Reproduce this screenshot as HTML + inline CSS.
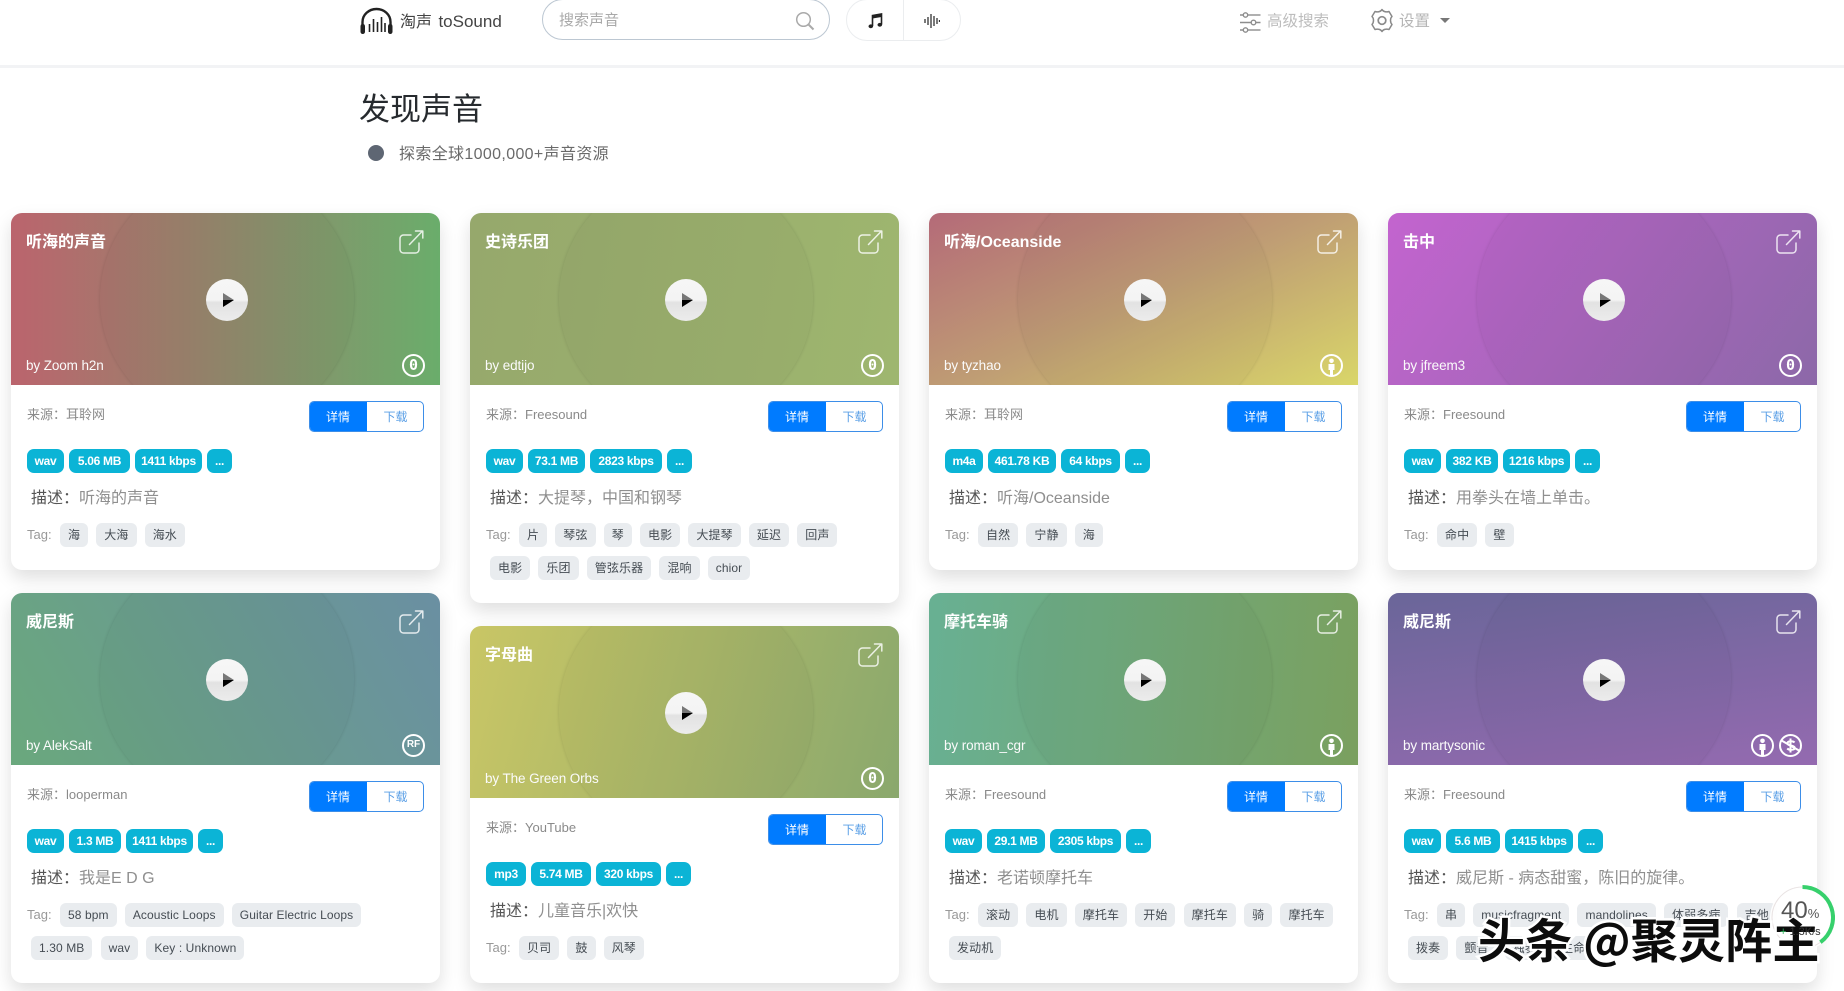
<!DOCTYPE html>
<html lang="zh"><head><meta charset="utf-8"><title>淘声 toSound</title>
<style>
*{box-sizing:border-box}
html,body{margin:0;padding:0;width:1844px;height:991px;overflow:hidden;background:#fff;font-family:"Liberation Sans","Noto Sans CJK SC",sans-serif}
.a{position:absolute}
.nav{position:absolute;left:0;top:0;width:1844px;height:68px;border-bottom:3px solid #f2f3f5}
.card{position:absolute;width:429px;background:#fff;border-radius:11px;box-shadow:0 8px 18px rgba(0,0,0,.13)}
.hd{position:absolute;left:0;top:0;width:429px;height:172px;overflow:hidden;border-radius:11px 11px 0 0;color:#fff}
.disc{position:absolute;left:89px;top:-41px;width:254px;height:254px;border-radius:50%;background:rgba(0,0,0,.025);box-shadow:0 0 3px rgba(0,0,0,.13)}
.play{position:absolute;left:195px;top:66px;width:42px;height:42px;border-radius:50%;background:linear-gradient(180deg,#f6f6f6 0,#f4f4f4 50%,#e2e2e2 56%,#ececec 100%)}
.play svg{position:absolute;left:0;top:0}
.tt{position:absolute;left:15px;top:18px;font-size:16px;line-height:24px;font-weight:700;white-space:nowrap}
.by{position:absolute;left:15px;top:143px;font-size:13.5px;letter-spacing:-.1px;line-height:20px;color:#fbfbfb;white-space:nowrap}
.sh{position:absolute;left:388px;top:17px}
.lic{position:absolute;top:141px;width:23px;height:23px;border:2.5px solid #fff;border-radius:50%;text-align:center;color:#fff;font:700 15px/18px "DejaVu Sans Mono","Liberation Mono",monospace}
.rf{font:700 10px/18px "Liberation Sans",sans-serif}
.lic svg{position:absolute;left:-2.5px;top:-2.5px}
.src{position:absolute;left:16px;top:192px;font-size:13px;line-height:20px;color:#8a8a8a;white-space:nowrap}
.btn{position:absolute;left:298px;top:188px;width:115px;height:31px;border-radius:5px;border:1px solid #3d8ee8;overflow:hidden;font-size:12px;line-height:30px;text-align:center}
.btn b{position:absolute;left:-1px;top:-1px;width:58px;height:31px;line-height:32px;background:#007bff;color:#fff;font-weight:400}
.btn i{position:absolute;left:57px;top:0;width:57px;font-style:normal;color:#5a9fe6}
.bg{position:absolute;left:16px;top:236px;display:flex;gap:5px}
.bg span{height:24px;line-height:24px;text-align:center;border-radius:7px;background:#0bb4d6;color:#fff;font-size:12px;font-weight:700;letter-spacing:-.3px;white-space:nowrap}
.ds{position:absolute;left:20px;top:274px;font-size:16px;line-height:24px;color:#8f8f8f;white-space:nowrap}
.ds b{font-weight:400;color:#555}
.tr{position:absolute;top:310px;display:flex;gap:8.2px;height:24px;align-items:center;white-space:nowrap}
.t1{left:49px}.t2{top:343px;left:20px}
.tr span{height:24px;line-height:24px;padding:0 8px;border-radius:6px;background:#e9ecef;color:#454c53;font-size:12px;letter-spacing:.1px}
.tl{position:absolute;left:16px;top:310px;font-size:13px;line-height:24px;color:#999}
.wm{position:absolute;left:1478px;top:906px;font-family:"Noto Sans CJK SC",sans-serif;font-size:47px;font-weight:700;line-height:64px;color:#0c0c0c;white-space:nowrap;-webkit-text-stroke:5px #fff;paint-order:stroke fill;letter-spacing:.2px}
</style></head><body>
<svg width="0" height="0" style="position:absolute"><defs>
<symbol id="share" viewBox="0 0 25 24"><g fill="none" stroke="#fff" stroke-opacity=".82" stroke-width="1.5" stroke-linecap="round" stroke-linejoin="round"><path d="M12 5H4.5A3.5 3.5 0 0 0 1 8.500V19.500A3.500 3.500 0 0 0 4.500 23H16.500A3.500 3.500 0 0 0 20 19.500V13"/><path d="M10.500 14.500L23.500 1M16.500 1H23.800V8"/></g></symbol>
<symbol id="man" viewBox="0 0 23 23"><circle cx="11.500" cy="6.800" r="2.300" fill="#fff"/><path d="M8.500 10h6v6h-1.500v5h-3v-5h-1.500z" fill="#fff"/></symbol>
<symbol id="nc" viewBox="0 0 23 23"><path d="M15.500 8.500c-1.500-1.800-7-1.800-7 .8 0 3 7.200 1.600 7.200 4.600 0 2.500-5.600 2.400-7.500.6M11.500 4.500v14" fill="none" stroke="#fff" stroke-width="2"/><path d="M2.500 6.500L20 16.500" stroke="#fff" stroke-width="2"/></symbol>
</defs></svg>

<div class="nav"></div>
<svg class="a" style="left:360px;top:7px" width="33" height="28" viewBox="0 0 33 28"><path d="M2.500 20V15A14 13 0 0 1 30.500 15V20" fill="none" stroke="#222" stroke-width="2.400"/><rect x=".5" y="17" width="4.500" height="10" rx="2.200" fill="#222"/><rect x="28" y="17" width="4.500" height="10" rx="2.200" fill="#222"/><path d="M9.500 17v8M13.500 12v13M17.500 15v10M21.500 10v15M25 16v9" stroke="#222" stroke-width="1.600"/></svg>
<div class="a" style="left:400px;top:10px;font-size:16px;line-height:24px;color:#444;white-space:nowrap">淘声 <span style="font-size:17px;margin-left:2px">toSound</span></div>
<div class="a" style="left:542px;top:-1px;width:288px;height:41px;border:1px solid #bcc7d2;border-radius:21px"></div>
<div class="a" style="left:559px;top:10px;font-size:15px;line-height:22px;color:#a9a9a9">搜索声音</div>
<svg class="a" style="left:795px;top:11px" width="20" height="20" viewBox="0 0 20 20"><circle cx="8.500" cy="8.500" r="6.800" fill="none" stroke="#aaa" stroke-width="1.500"/><path d="M13.500 13.500L18.500 18.500" stroke="#aaa" stroke-width="2"/></svg>
<div class="a" style="left:846px;top:-1px;width:115px;height:42px;border:1px solid #ebedef;border-radius:21px"></div>
<div class="a" style="left:903px;top:0;width:1px;height:41px;background:#ebedef"></div>
<svg class="a" style="left:868px;top:13px" width="15" height="16" viewBox="0 0 15 16"><path d="M4.500 13V2.500L13.500 1V11.500" fill="none" stroke="#222" stroke-width="1.600"/><path d="M4.500 2.500L13.500 1V4L4.500 5.500z" fill="#222"/><ellipse cx="2.800" cy="13.300" rx="2.300" ry="1.900" fill="#222"/><ellipse cx="11.800" cy="11.800" rx="2.300" ry="1.900" fill="#222"/></svg>
<svg class="a" style="left:924px;top:14px" width="16" height="14" viewBox="0 0 16 14"><path d="M1 5v4M4 3v8M7 0v14M10 2v10M13 4v6M15.500 6v2" stroke="#333" stroke-width="1.300"/></svg>
<svg class="a" style="left:1240px;top:12px" width="21" height="21" viewBox="0 0 21 21"><g fill="none" stroke="#8d8d8d" stroke-width="1.400"><circle cx="5.500" cy="3" r="2.200"/><path d="M8 3H20.500"/><path d="M0 10.500H11M16 10.500H20.500"/><circle cx="13.500" cy="10.500" r="2.300"/><circle cx="5.500" cy="18" r="2.200"/><path d="M8 18H20.500"/><path d="M0 3H3M0 18H3"/></g></svg>
<div class="a" style="left:1267px;top:10px;font-size:15.500px;line-height:24px;color:#bdbdbd;white-space:nowrap">高级搜索</div>
<svg class="a" style="left:1370px;top:8px" width="24" height="25" viewBox="0 0 24 25"><path d="M12 1.500c1 2 4 3 7 2l3 5c-2 1.800-2 6 0 8l-3 5c-3-1-6 0-7 2-1-2-4-3-7-2l-3-5c2-2 2-6.200 0-8l3-5c3 1 6 0 7-2z" fill="none" stroke="#8a8a8a" stroke-width="1.500" stroke-linejoin="round"/><circle cx="12" cy="12.500" r="3.800" fill="none" stroke="#8a8a8a" stroke-width="1.700"/></svg>
<div class="a" style="left:1399px;top:10px;font-size:15.500px;line-height:24px;color:#b5b5b5;white-space:nowrap">设置</div>
<div class="a" style="left:1440px;top:18px;width:0;height:0;border-left:5px solid transparent;border-right:5px solid transparent;border-top:5px solid #777"></div>

<div class="a" style="left:359px;top:89px;font-size:31px;line-height:42px;color:#262a2e;white-space:nowrap">发现声音</div>
<div class="a" style="left:368px;top:145px;width:16px;height:16px;border-radius:50%;background:#5e6673"></div>
<div class="a" style="left:399px;top:143px;font-size:16px;letter-spacing:.35px;line-height:24px;color:#6a6a6a;white-space:nowrap">探索全球1000,000+声音资源</div>

<!-- 1 -->
<div class="card" style="left:11px;top:213px;height:357px">
<div class="hd" style="background:linear-gradient(90deg,#bb646d,#6aad6b)"><div class="disc"></div><div class="play"><svg width="42" height="42"><polygon points="17,14 28,21 17,21" fill="#777"/><polygon points="17,21 28,21 17,28" fill="#000"/></svg></div><div class="tt">听海的声音</div><div class="by">by Zoom h2n</div><svg class="sh" width="25" height="24"><use href="#share"/></svg><div class="lic" style="left:391px">0</div></div>
<div class="src">来源&#65306;耳聆网</div><div class="btn"><b>详情</b><i>下载</i></div>
<div class="bg"><span style="width:37px">wav</span><span style="width:61px">5.06 MB</span><span style="width:67px">1411 kbps</span><span style="width:25px">...</span></div>
<div class="ds"><b>描述&#65306;</b>听海的声音</div>
<div class="tl">Tag:</div><div class="tr t1"><span>海</span><span>大海</span><span>海水</span></div>
</div>
<!-- 2 -->
<div class="card" style="left:470px;top:213px;height:390px">
<div class="hd" style="background:linear-gradient(100deg,#96a86c,#9eb66f)"><div class="disc"></div><div class="play"><svg width="42" height="42"><polygon points="17,14 28,21 17,21" fill="#777"/><polygon points="17,21 28,21 17,28" fill="#000"/></svg></div><div class="tt">史诗乐团</div><div class="by">by edtijo</div><svg class="sh" width="25" height="24"><use href="#share"/></svg><div class="lic" style="left:391px">0</div></div>
<div class="src">来源&#65306;Freesound</div><div class="btn"><b>详情</b><i>下载</i></div>
<div class="bg"><span style="width:37px">wav</span><span style="width:57px">73.1 MB</span><span style="width:72px">2823 kbps</span><span style="width:25px">...</span></div>
<div class="ds"><b>描述&#65306;</b>大提琴&#65292;中国和钢琴</div>
<div class="tl">Tag:</div><div class="tr t1"><span>片</span><span>琴弦</span><span>琴</span><span>电影</span><span>大提琴</span><span>延迟</span><span>回声</span></div>
<div class="tr t2"><span>电影</span><span>乐团</span><span>管弦乐器</span><span>混响</span><span>chior</span></div>
</div>
<!-- 3 -->
<div class="card" style="left:929px;top:213px;height:357px">
<div class="hd" style="background:linear-gradient(155deg,#b46a78 0,#bf9d74 50%,#d9d669 100%)"><div class="disc"></div><div class="play"><svg width="42" height="42"><polygon points="17,14 28,21 17,21" fill="#777"/><polygon points="17,21 28,21 17,28" fill="#000"/></svg></div><div class="tt">听海/Oceanside</div><div class="by">by tyzhao</div><svg class="sh" width="25" height="24"><use href="#share"/></svg><div class="lic" style="left:391px"><svg width="23" height="23"><use href="#man"/></svg></div></div>
<div class="src">来源&#65306;耳聆网</div><div class="btn"><b>详情</b><i>下载</i></div>
<div class="bg"><span style="width:38px">m4a</span><span style="width:68px">461.78 KB</span><span style="width:59px">64 kbps</span><span style="width:25px">...</span></div>
<div class="ds"><b>描述&#65306;</b>听海/Oceanside</div>
<div class="tl">Tag:</div><div class="tr t1"><span>自然</span><span>宁静</span><span>海</span></div>
</div>
<!-- 4 -->
<div class="card" style="left:1388px;top:213px;height:357px">
<div class="hd" style="background:linear-gradient(125deg,#c364cf,#8c68a8)"><div class="disc"></div><div class="play"><svg width="42" height="42"><polygon points="17,14 28,21 17,21" fill="#777"/><polygon points="17,21 28,21 17,28" fill="#000"/></svg></div><div class="tt">击中</div><div class="by">by jfreem3</div><svg class="sh" width="25" height="24"><use href="#share"/></svg><div class="lic" style="left:391px">0</div></div>
<div class="src">来源&#65306;Freesound</div><div class="btn"><b>详情</b><i>下载</i></div>
<div class="bg"><span style="width:37px">wav</span><span style="width:52px">382 KB</span><span style="width:67px">1216 kbps</span><span style="width:25px">...</span></div>
<div class="ds"><b>描述&#65306;</b>用拳头在墙上单击。</div>
<div class="tl">Tag:</div><div class="tr t1"><span>命中</span><span>壁</span></div>
</div>
<!-- 5 -->
<div class="card" style="left:11px;top:593px;height:390px">
<div class="hd" style="background:linear-gradient(60deg,#6aa87d,#6a8fa2)"><div class="disc"></div><div class="play"><svg width="42" height="42"><polygon points="17,14 28,21 17,21" fill="#777"/><polygon points="17,21 28,21 17,28" fill="#000"/></svg></div><div class="tt">威尼斯</div><div class="by">by AlekSalt</div><svg class="sh" width="25" height="24"><use href="#share"/></svg><div class="lic rf" style="left:391px">RF</div></div>
<div class="src">来源&#65306;looperman</div><div class="btn"><b>详情</b><i>下载</i></div>
<div class="bg"><span style="width:37px">wav</span><span style="width:52px">1.3 MB</span><span style="width:67px">1411 kbps</span><span style="width:25px">...</span></div>
<div class="ds"><b>描述&#65306;</b>我是E D G</div>
<div class="tl">Tag:</div><div class="tr t1"><span>58 bpm</span><span>Acoustic Loops</span><span>Guitar Electric Loops</span></div>
<div class="tr t2"><span>1.30 MB</span><span>wav</span><span>Key : Unknown</span></div>
</div>
<!-- 6 -->
<div class="card" style="left:470px;top:626px;height:357px">
<div class="hd" style="background:linear-gradient(105deg,#c9c665,#8aa86d)"><div class="disc"></div><div class="play"><svg width="42" height="42"><polygon points="17,14 28,21 17,21" fill="#777"/><polygon points="17,21 28,21 17,28" fill="#000"/></svg></div><div class="tt">字母曲</div><div class="by">by The Green Orbs</div><svg class="sh" width="25" height="24"><use href="#share"/></svg><div class="lic" style="left:391px">0</div></div>
<div class="src">来源&#65306;YouTube</div><div class="btn"><b>详情</b><i>下载</i></div>
<div class="bg"><span style="width:40px">mp3</span><span style="width:60px">5.74 MB</span><span style="width:65px">320 kbps</span><span style="width:25px">...</span></div>
<div class="ds"><b>描述&#65306;</b>儿童音乐|欢快</div>
<div class="tl">Tag:</div><div class="tr t1"><span>贝司</span><span>鼓</span><span>风琴</span></div>
</div>
<!-- 7 -->
<div class="card" style="left:929px;top:593px;height:390px">
<div class="hd" style="background:linear-gradient(95deg,#68b093,#7aa05f)"><div class="disc"></div><div class="play"><svg width="42" height="42"><polygon points="17,14 28,21 17,21" fill="#777"/><polygon points="17,21 28,21 17,28" fill="#000"/></svg></div><div class="tt">摩托车骑</div><div class="by">by roman_cgr</div><svg class="sh" width="25" height="24"><use href="#share"/></svg><div class="lic" style="left:391px"><svg width="23" height="23"><use href="#man"/></svg></div></div>
<div class="src">来源&#65306;Freesound</div><div class="btn"><b>详情</b><i>下载</i></div>
<div class="bg"><span style="width:37px">wav</span><span style="width:58px">29.1 MB</span><span style="width:71px">2305 kbps</span><span style="width:25px">...</span></div>
<div class="ds"><b>描述&#65306;</b>老诺顿摩托车</div>
<div class="tl">Tag:</div><div class="tr t1"><span>滚动</span><span>电机</span><span>摩托车</span><span>开始</span><span>摩托车</span><span>骑</span><span>摩托车</span></div>
<div class="tr t2"><span>发动机</span></div>
</div>
<!-- 8 -->
<div class="card" style="left:1388px;top:593px;height:390px">
<div class="hd" style="background:linear-gradient(172deg,#6a6699,#946ab0)"><div class="disc"></div><div class="play"><svg width="42" height="42"><polygon points="17,14 28,21 17,21" fill="#777"/><polygon points="17,21 28,21 17,28" fill="#000"/></svg></div><div class="tt">威尼斯</div><div class="by">by martysonic</div><svg class="sh" width="25" height="24"><use href="#share"/></svg><div class="lic" style="left:363px"><svg width="23" height="23"><use href="#man"/></svg></div><div class="lic" style="left:391px"><svg width="23" height="23"><use href="#nc"/></svg></div></div>
<div class="src">来源&#65306;Freesound</div><div class="btn"><b>详情</b><i>下载</i></div>
<div class="bg"><span style="width:37px">wav</span><span style="width:54px">5.6 MB</span><span style="width:68px">1415 kbps</span><span style="width:25px">...</span></div>
<div class="ds"><b>描述&#65306;</b>威尼斯 - 病态甜蜜&#65292;陈旧的旋律。</div>
<div class="tl">Tag:</div><div class="tr t1"><span>串</span><span>musicfragment</span><span>mandolines</span><span>体弱多病</span><span>吉他</span></div>
<div class="tr t2"><span>拨奏</span><span>颤音</span><span>独奏</span><span>生命</span></div>
</div>

<!-- speed widget -->
<div class="a" style="left:1770px;top:885px;width:65px;height:65px;border-radius:50%;background:rgba(255,255,255,.92)"></div>
<svg class="a" style="left:1770px;top:885px" width="65" height="65" viewBox="0 0 65 65"><circle cx="32.500" cy="32.500" r="30.500" fill="none" stroke="#e9e3e3" stroke-width="1"/><path d="M32.500 2A30.500 30.500 0 0 1 50.400 57.200" fill="none" stroke="#37d06c" stroke-width="4"/></svg>
<div class="wm">头条 @聚灵阵主</div>
<div class="a" style="left:1781px;top:896px;font-size:24px;line-height:30px;color:#555;white-space:nowrap">40<span style="font-size:13px">%</span></div>
<div class="a" style="left:1780px;top:925px;font-size:11px;line-height:14px;color:#333;white-space:nowrap"><span style="color:#2fb35c">+</span> 1.3K/s</div>
</body></html>
